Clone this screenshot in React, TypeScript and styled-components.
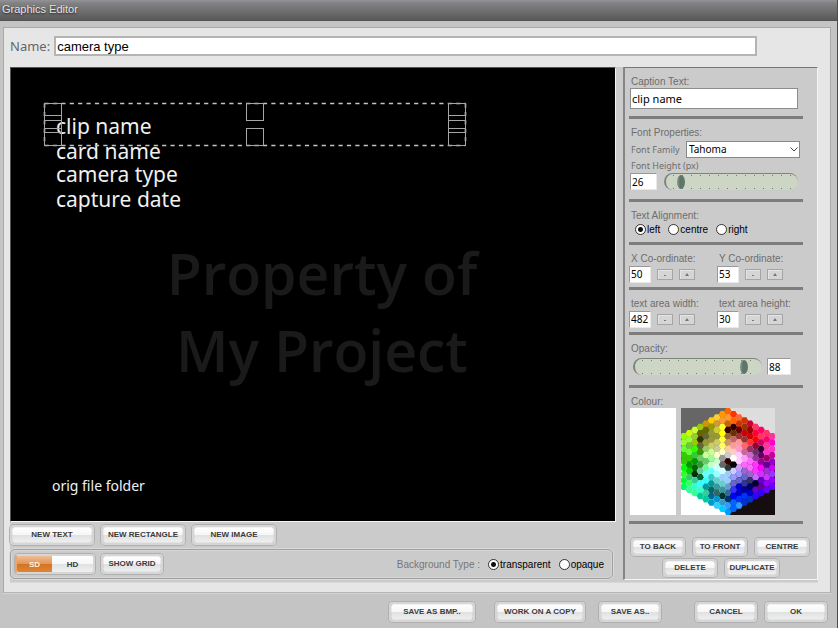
import React, { useState } from "react";
import styled, { createGlobalStyle } from "styled-components";

const GlobalStyle = createGlobalStyle`
  * { box-sizing: border-box; }
  body {
    margin: 0;
    background: #c4c4c4;
    color: #111;
    font-family: "Liberation Sans", Arial, sans-serif;
  }
  button, input, select { font-family: inherit; margin: 0; }
`;

const tahoma = `"Noto Sans", Tahoma, sans-serif`;

const Page = styled.div`
  min-height: 100vh;
  display: flex;
  flex-direction: column;
  border-right: 1px solid #4c4c4c;
`;

const TitleBar = styled.h1`
  margin: 0;
  height: 21px;
  padding: 1px 2px 0;
  font-size: 11px;
  line-height: 16px;
  font-weight: 400;
  color: #e4e4e4;
  text-shadow: 0 1px 2px #222;
  background: linear-gradient(#92949a 0, #828282 15%, #5b5b5b 92%, #505050);
`;

const Frame = styled.main`
  margin: 6px 6px 0 3px;
  padding: 8px 12px 9px 6px;
  border: 1px solid #a9a9a9;
  border-bottom-color: #b4b4b4;
  background: #e6e6e6;
  box-shadow: 0 1px 0 #d4d4d4;
  display: flex;
  flex-direction: column;
  gap: 11px;
`;

const NameRow = styled.div`
  display: flex;
  align-items: center;
  gap: 4px;
  padding-right: 61px;
`;

const NameLabel = styled.label`
  font-family: ${tahoma};
  font-size: 13px;
  line-height: 20px;
  color: #666;
`;

const TextBox = styled.input`
  min-width: 0;
  background: #fff;
  color: #000;
  outline: none;
`;

const NameBox = styled(TextBox)`
  flex: 1;
  height: 20px;
  padding: 0 1px;
  border: 2px solid #b4b4b4;
  font-size: 13px;
`;

const CaptionBox = styled(TextBox)`
  width: calc(100% - 6px);
  height: 21px;
  margin-left: 1px;
  padding: 0 1px;
  border: 1px solid #8d8d8d;
  font-family: ${tahoma};
  font-size: 11px;
`;

const Workspace = styled.div`
  display: flex;
  background: #cbcbcb;
  border-bottom: 1px solid #d8d8d8;
`;

const LeftColumn = styled.div`
  flex: 1;
  min-width: 0;
  display: flex;
  flex-direction: column;
`;

const Canvas = styled.div`
  position: relative;
  flex: 1;
  overflow: hidden;
  background: #000;
  border: 1px solid #555;
  border-color: #555 #f4f4f4 #f4f4f4 #555;
`;

const Caption = styled.span<{ $x: number; $y: number; $small?: boolean }>`
  position: absolute;
  left: ${(p) => p.$x}px;
  top: ${(p) => p.$y}px;
  font-family: ${tahoma};
  font-size: ${(p) => (p.$small ? 14 : 21)}px;
  line-height: 22px;
  color: #f0f0f0;
  white-space: nowrap;
`;

const Watermark = styled.div`
  position: absolute;
  left: 0;
  right: 0;
  top: 167px;
  padding-left: 18px;
  font-family: "Open Sans", "Noto Sans", sans-serif;
  font-weight: 600;
  font-size: 57px;
  line-height: 77px;
  text-align: center;
  color: #1a1a1a;
`;

const SelectionLayer = styled.svg`
  position: absolute;
  left: 32px;
  top: 34px;
`;

const InsertRow = styled.div`
  display: flex;
  gap: 7px;
  padding: 3px 0;
`;

const OptionBar = styled.div`
  display: flex;
  align-items: center;
  gap: 6px;
  height: 30px;
  margin: 1px 3px 3px 0;
  padding: 0 8px 0 4px;
  border: 1px solid #a0a0a0;
  border-radius: 5px;
  box-shadow: 0 0 0 1px #dadada, inset 0 0 0 1px #d6d6d6;
`;

const Button = styled.button<{ $w: number; $short?: boolean }>`
  width: ${(p) => p.$w}px;
  height: ${(p) => (p.$short ? 18 : 20)}px;
  padding: 0;
  border: 2px solid #d6d6d6;
  border-radius: 4px;
  background: linear-gradient(#fff, #f6f6f6 48%, #e0e1e3 52%, #f0f0f0);
  background-clip: padding-box;
  box-shadow: 0 0 0 1px #b0b0b0, inset 0 0 1px #777;
  color: #3b3b3b;
  font-size: 8px;
  font-weight: 700;
  line-height: 10px;
  white-space: nowrap;
  text-align: center;
`;

const Toggle = styled.div`
  display: flex;
  width: 80px;
  height: 20px;
  border: 2px solid #d6d6d6;
  border-left-color: #eba76b;
  border-radius: 4px;
  overflow: hidden;
  box-shadow: 0 0 0 1px #b0b0b0;
`;

const ToggleHalf = styled.button<{ $on: boolean }>`
  flex: ${(p) => (p.$on ? "0 0 35px" : 1)};
  padding: 0;
  border: 0;
  font-size: 8px;
  font-weight: 700;
  color: ${(p) => (p.$on ? "#fff2df" : "#3b3b3b")};
  background: ${(p) =>
    p.$on
      ? "linear-gradient(#eebd94, #e0975a 48%, #d4741f 52%, #df8534)"
      : "linear-gradient(#fff, #f6f6f6 48%, #e0e1e3 52%, #f0f0f0)"};
`;

const BackgroundGroup = styled.div`
  display: flex;
  align-items: center;
  margin-left: auto;
  gap: 8px;
  font-size: 10px;
  color: #777;
`;

const RadioLabel = styled.label`
  display: inline-flex;
  align-items: center;
  gap: 1px;
  height: 13px;
  font-family: "Liberation Sans", Arial, sans-serif;
  font-size: 10px;
  line-height: 13px;
  color: #000;
`;

const Radio = styled.input`
  appearance: none;
  width: 11px;
  height: 11px;
  border: 1px solid #333;
  border-radius: 50%;
  background: #fff;
  &:checked { background: radial-gradient(circle, #111 0 2px, #fff 3px); }
`;

const Sidebar = styled.aside`
  flex: 0 0 195px;
  margin: 0 0 2px 7px;
  padding: 8px 5px 2px 4px;
  border: 1px solid #777;
  border-left: 2px solid #858585;
  border-right-color: #f4f4f4;
  border-bottom-color: #f4f4f4;
`;

const Section = styled.section<{ $bottom: number }>`
  width: 174px;
  padding-bottom: ${(p) => p.$bottom}px;
  margin-bottom: 8px;
  border-bottom: 3px solid #7d7d7d;
`;

const Label = styled.label`
  display: block;
  height: 12px;
  padding-left: 2px;
  font-size: 10px;
  line-height: 12px;
  color: #6d6d6d;
  white-space: nowrap;
`;

const SmallLabel = styled(Label)`
  font-family: ${tahoma};
  font-size: 9px;
`;

const Row = styled.div<{ $gap?: number; $top?: number; $left?: number }>`
  display: flex;
  align-items: center;
  gap: ${(p) => p.$gap ?? 0}px;
  margin-top: ${(p) => p.$top ?? 0}px;
  padding-left: ${(p) => p.$left ?? 0}px;
`;

const Spread = styled(Row)`
  justify-content: space-between;
  margin-bottom: 2px;
`;

const FontSelect = styled.select`
  appearance: none;
  width: 114px;
  height: 17px;
  margin-right: 3px;
  padding: 0 2px;
  border: 1px solid #888;
  border-radius: 0;
  font-family: ${tahoma};
  font-size: 10px;
  line-height: 15px;
  color: #000;
  background: #fff;
`;

const SelectWrap = styled.div`
  position: relative;
  display: flex;
  svg { position: absolute; right: 5px; top: 6px; pointer-events: none; }
`;

const NumberBox = styled.input<{ $w: number }>`
  width: ${(p) => p.$w}px;
  height: 17px;
  padding: 0 1px;
  border: 1px solid #999;
  border-right-color: #e8e8e8;
  border-bottom-color: #e8e8e8;
  background: #fff;
  font-family: ${tahoma};
  font-size: 10px;
  color: #000;
`;

const Slider = styled.input<{ $w: number }>`
  appearance: none;
  width: ${(p) => p.$w}px;
  height: 17px;
  border-radius: 9px;
  border: solid #7c857a;
  border-width: 1px 0 0 2px;
  border-right-color: transparent;
  background:
    repeating-linear-gradient(90deg, transparent 0 7px, #6f7f6d 7px 8px, transparent 8px 9px) 0 1px / 100% 1px no-repeat,
    repeating-linear-gradient(90deg, transparent 0 7px, #6f7f6d 7px 8px, transparent 8px 9px) 0 14px / 100% 1px no-repeat,
    #cdd5c5;
  &::-webkit-slider-thumb {
    appearance: none;
    width: 8px;
    height: 14px;
    border-radius: 50%;
    background: linear-gradient(90deg, #8a9a90, #5d7467 40%, #61796c);
  }
`;

const Pair = styled.div`
  display: grid;
  grid-template-columns: 88px 86px;
`;

const Stepper = styled.div`
  display: flex;
  align-items: center;
  gap: 6px;
  margin-top: 1px;
  height: 16px;
`;

const StepButton = styled.button`
  width: 16px;
  height: 11px;
  padding: 0;
  display: grid;
  place-items: center;
  border: 1px solid #a5a5a5;
  background: #d5d5d5;
  box-shadow: inset 1px 1px 0 #e4e4e4;
`;

const Swatch = styled.div`
  width: 46px;
  height: 107px;
  background: #fff;
`;

const Actions = styled.div`
  display: grid;
  gap: 3px;
  padding-top: 6px;
`;

const ButtonRow = styled.div<{ $indent?: number }>`
  display: flex;
  gap: 8px;
  padding-left: ${(p) => p.$indent ?? 2}px;
`;

const Footer = styled.footer`
  display: flex;
  justify-content: flex-end;
  padding: 9px 10px 6px;
  gap: 10px;
`;

const FooterGroup = styled.div<{ $gap: number; $after?: number }>`
  display: flex;
  gap: ${(p) => p.$gap}px;
  margin-right: ${(p) => p.$after ?? 0}px;
`;

const paletteColumns = [
  "9f0 9f3 6f3 3c0 3c0 0f0 3f3 0f3 0f6",
  "cf0 9f3 6c3 6f3 3c0 090 0c0 3c6 3f6 3f9",
  "cf3 9c3 9c0 3f0 3c3 090 060 030 3c9 3fc 3f9",
  "9c0 660 330 663 390 6c6 393 6c9 063 3ff 3fc 0c9",
  "c90 660 663 993 9c6 cf9 6c6 6f9 6ff 3ff 099 3c9 0c9",
  "fc0 990 993 993 cc6 cf9 9f9 cfc 6ff 3cc 099 066 069 09c",
  "fc3 c93 cc3 993 cc6 cc9 ffc cfc cff 9ff 6cc 399 366 09c 3cf",
  "f90 f93 ff3 ff0 ff3 ff6 ffc 999 666 cff 9cf 6cc 399 033 39c 0cf",
  "f60 f93 c60 300 963 c96 fc9 ccc 300 333 9cf 9cf 69c 369 036 39f 09f",
  "f30 f60 300 630 c66 f99 fcc fff 000 ccf 99f 66c 33f 00f 06f 06f",
  "f63 c30 600 933 f99 f9c fcf fcf c9f 99f 66c 00c 00c 03f 39f",
  "c30 930 c00 933 f66 c69 f9f f6f 96c 66c 339 009 03f 03c",
  "c03 900 c00 f33 936 c6c f6f f6f 96c 336 006 00c 03c",
  "f36 f03 f00 903 636 939 f3f f3f c6f 003 60c 30f",
  "f06 f36 c06 303 606 909 f0f c3f 60c 609 30f",
  "f36 f06 f39 f3c 906 609 93c c3f 90f 60f",
  "f39 f0c f3c c09 90c c0f 93f 90f 60f",
].map((column) => column.split(" "));

function Palette() {
  const stepX = 94 / 17;
  const stepY = 107 / 17;
  return (
    <svg width="94" height="107" role="img" aria-label="Colour palette">
      <rect width="47" height="54" fill="#666" />
      <rect x="47" width="47" height="54" fill="#ddd" />
      <rect y="54" width="47" height="53" fill="#fff" />
      <rect x="47" y="54" width="47" height="53" fill="#150d10" />
      {paletteColumns.map((column, i) =>
        column.map((colour, j) => {
          const cx = stepX * (i + 0.5);
          const cy = stepY * (j + 0.5 + Math.abs(i - 8) / 2);
          const h = stepY / 2 + 0.1;
          const points = [[-3.7, 0], [-1.8, -h], [1.8, -h], [3.7, 0], [1.8, h], [-1.8, h]]
            .map(([dx, dy]) => `${(cx + dx).toFixed(2)},${(cy + dy).toFixed(2)}`)
            .join(" ");
          return <polygon key={`${i}-${j}`} points={points} fill={`#${colour}`} />;
        })
      )}
    </svg>
  );
}

function Selection() {
  const handles = [
    [1, 1], [1, 13], [1, 26],
    [203, 1], [203, 26],
    [405, 1], [405, 13], [405, 26],
  ];
  return (
    <SelectionLayer width="426" height="46" fill="none" aria-hidden="true">
      <g transform="translate(.5 .5)">
        <path d="M1 1H422M1 43H422" stroke="#c4c4c4" strokeWidth="1.6" strokeDasharray="4.2 4.2" />
        <path d="M1 1V43M422 1V43" stroke="#c4c4c4" strokeWidth="1.6" strokeDasharray="4.2 4.2" />
        {handles.map(([x, y]) => (
          <rect key={`${x}-${y}`} x={x} y={y} width="17" height="17" stroke="#a6a6a6" />
        ))}
      </g>
    </SelectionLayer>
  );
}

function NumberStepper({ id, label, initial }: { id: string; label: string; initial: number }) {
  const [value, setValue] = useState(initial);
  return (
    <div>
      <Label htmlFor={id}>{label}</Label>
      <Stepper>
        <NumberBox id={id} $w={22} value={value} onChange={(e) => setValue(Number(e.target.value) || 0)} />
        <StepButton aria-label={`Decrease ${label}`} onClick={() => setValue(value - 1)}>
          <svg width="6" height="4"><path d="M2 3.500H4" stroke="#777" /></svg>
        </StepButton>
        <StepButton aria-label={`Increase ${label}`} onClick={() => setValue(value + 1)}>
          <svg width="6" height="4"><path d="M3 1L5 4H1Z" fill="#777" /></svg>
        </StepButton>
      </Stepper>
    </div>
  );
}

export default function App() {
  const [name, setName] = useState("camera type");
  const [caption, setCaption] = useState("clip name");
  const [fontHeight, setFontHeight] = useState(26);
  const [opacity, setOpacity] = useState(88);
  const [format, setFormat] = useState("SD");

  return (
    <>
      <GlobalStyle />
      <Page>
        <TitleBar>Graphics Editor</TitleBar>
        <Frame>
          <NameRow>
            <NameLabel htmlFor="name">Name:</NameLabel>
            <NameBox id="name" value={name} onChange={(e) => setName(e.target.value)} />
          </NameRow>
          <Workspace>
            <LeftColumn>
              <Canvas>
                <Watermark>Property of<br />My Project</Watermark>
                <Caption $x={45} $y={47}>{caption}</Caption>
                <Caption $x={45} $y={72}>card name</Caption>
                <Caption $x={45} $y={95}>camera type</Caption>
                <Caption $x={45} $y={120}>capture date</Caption>
                <Caption $x={41} $y={407} $small>orig file folder</Caption>
                <Selection />
              </Canvas>
              <InsertRow>
                <Button $w={84}>NEW TEXT</Button>
                <Button $w={84}>NEW RECTANGLE</Button>
                <Button $w={84}>NEW IMAGE</Button>
              </InsertRow>
              <OptionBar>
                <Toggle>
                  {["SD", "HD"].map((f) => (
                    <ToggleHalf key={f} $on={format === f} aria-pressed={format === f} onClick={() => setFormat(f)}>{f}</ToggleHalf>
                  ))}
                </Toggle>
                <Button $w={62}>SHOW GRID</Button>
                <BackgroundGroup role="radiogroup" aria-label="Background Type">
                  <span>Background Type :</span>
                  <RadioLabel><Radio type="radio" name="background" defaultChecked />transparent</RadioLabel>
                  <RadioLabel><Radio type="radio" name="background" />opaque</RadioLabel>
                </BackgroundGroup>
              </OptionBar>
            </LeftColumn>
            <Sidebar>
              <Section $bottom={7}>
                <Label htmlFor="caption">Caption Text:</Label>
                <CaptionBox id="caption" value={caption} onChange={(e) => setCaption(e.target.value)} />
              </Section>
              <Section $bottom={9}>
                <Label as="div">Font Properties:</Label>
                <Spread $top={2}>
                  <SmallLabel htmlFor="family">Font Family</SmallLabel>
                  <SelectWrap>
                    <FontSelect id="family" defaultValue="Tahoma">
                      <option>Tahoma</option>
                      <option>Arial</option>
                    </FontSelect>
                    <svg width="8" height="5" fill="none"><path d="M.5.5L4 4L7.500.5" stroke="#444" /></svg>
                  </SelectWrap>
                </Spread>
                <SmallLabel htmlFor="height">Font Height (px)</SmallLabel>
                <Row $top={1} $gap={7} $left={1}>
                  <NumberBox id="height" $w={27} value={fontHeight} onChange={(e) => setFontHeight(Number(e.target.value) || 0)} />
                  <Slider $w={134} type="range" aria-label="Font height" min={0} max={300} value={fontHeight} onChange={(e) => setFontHeight(Number(e.target.value))} />
                </Row>
              </Section>
              <Section $bottom={6}>
                <Label as="div">Text Alignment:</Label>
                <Row $top={1} $gap={8} $left={6} role="radiogroup" aria-label="Text Alignment">
                  <RadioLabel><Radio type="radio" name="align" defaultChecked />left</RadioLabel>
                  <RadioLabel><Radio type="radio" name="align" />centre</RadioLabel>
                  <RadioLabel><Radio type="radio" name="align" />right</RadioLabel>
                </Row>
              </Section>
              <Section $bottom={5}>
                <Pair>
                  <NumberStepper id="x" label="X Co-ordinate:" initial={50} />
                  <NumberStepper id="y" label="Y Co-ordinate:" initial={53} />
                </Pair>
              </Section>
              <Section $bottom={5}>
                <Pair>
                  <NumberStepper id="w" label="text area width:" initial={482} />
                  <NumberStepper id="h" label="text area height:" initial={30} />
                </Pair>
              </Section>
              <Section $bottom={10}>
                <Label htmlFor="opacity">Opacity:</Label>
                <Row $top={3} $gap={5} $left={4}>
                  <Slider $w={129} type="range" aria-label="Opacity level" min={0} max={100} value={opacity} onChange={(e) => setOpacity(Number(e.target.value))} />
                  <NumberBox id="opacity" $w={24} value={opacity} onChange={(e) => setOpacity(Number(e.target.value) || 0)} />
                </Row>
              </Section>
              <Section $bottom={6}>
                <Label as="div">Colour:</Label>
                <Row $gap={5} $left={1}>
                  <Swatch />
                  <Palette />
                </Row>
              </Section>
              <Actions>
                <ButtonRow>
                  <Button $short $w={54}>TO BACK</Button>
                  <Button $short $w={54}>TO FRONT</Button>
                  <Button $short $w={54}>CENTRE</Button>
                </ButtonRow>
                <ButtonRow $indent={34}>
                  <Button $short $w={54}>DELETE</Button>
                  <Button $short $w={54}>DUPLICATE</Button>
                </ButtonRow>
              </Actions>
            </Sidebar>
          </Workspace>
        </Frame>
        <Footer>
          <FooterGroup $gap={20} $after={4}>
            <Button $w={86}>SAVE AS BMP..</Button>
            <Button $w={90}>WORK ON A COPY</Button>
          </FooterGroup>
          <FooterGroup $gap={0} $after={24}>
            <Button $w={62}>SAVE AS..</Button>
          </FooterGroup>
          <FooterGroup $gap={8}>
            <Button $w={62}>CANCEL</Button>
            <Button $w={62}>OK</Button>
          </FooterGroup>
        </Footer>
      </Page>
    </>
  );
}
